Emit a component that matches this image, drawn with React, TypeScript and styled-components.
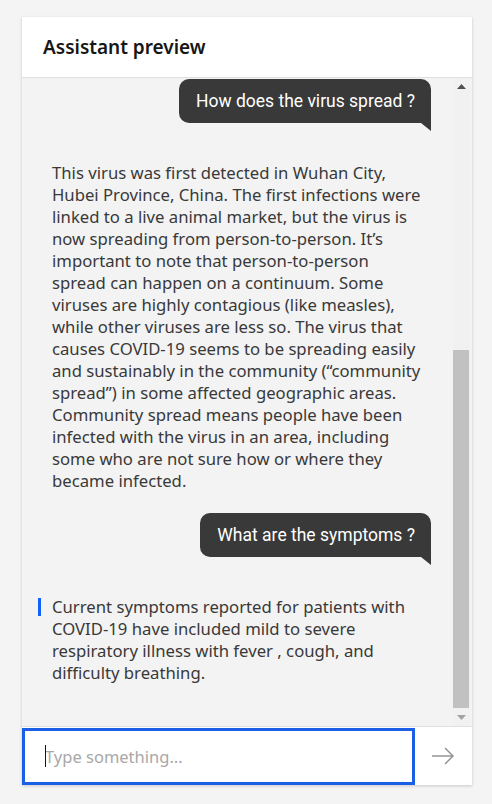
import React from "react";
import styled, { createGlobalStyle } from "styled-components";

const GlobalStyle = createGlobalStyle`
  html, body { margin: 0; padding: 0; background: #f4f4f4; }
  body { font-family: "Noto Sans", "Open Sans", sans-serif; }
  * { box-sizing: border-box; }
`;

const Page = styled.div`
  width: 492px;
  height: 804px;
  padding: 17px 20px 19px 22px;
  background: #f4f4f4;
`;

const Card = styled.section`
  width: 450px;
  height: 768px;
  display: flex;
  flex-direction: column;
  background: #f3f3f3;
  box-shadow: 0 1px 3px rgba(0, 0, 0, 0.18);
`;

const Header = styled.header`
  height: 61px;
  flex: none;
  display: flex;
  align-items: center;
  padding: 0 21px;
  background: #ffffff;
  border-bottom: 1px solid #e0e0e0;
  font-family: "Noto Sans", sans-serif;
  font-weight: 600;
  font-size: 19px;
  color: #161616;
`;

const Body = styled.div`
  flex: 1;
  display: flex;
  min-height: 0;
`;

const MessageList = styled.div`
  flex: 1;
  display: flex;
  flex-direction: column;
  padding: 1px 22px 0 16px;
  overflow: hidden;
`;

const UserRow = styled.div`
  display: flex;
  justify-content: flex-end;
  margin-bottom: 39px;
`;

const Bubble = styled.div`
  position: relative;
  background: #393939;
  color: #ffffff;
  font-family: Roboto, "Liberation Sans", sans-serif;
  font-size: 17.5px;
  line-height: 22px;
  padding: 11px 16px 11px 17px;
  border-radius: 10px 10px 0 10px;
  white-space: nowrap;

  &::after {
    content: "";
    position: absolute;
    right: 0;
    bottom: -8px;
    width: 10px;
    height: 8px;
    background: #393939;
    clip-path: polygon(0 0, 100% 0, 100% 100%);
  }
`;

const BotRow = styled.div`
  display: flex;
  align-items: flex-start;
  gap: 11px;
  margin-bottom: 21px;
`;

const Marker = styled.span<{ $visible: boolean }>`
  flex: none;
  width: 3px;
  height: 18px;
  margin-top: 2px;
  background: ${(p) => (p.$visible ? "#0f62fe" : "transparent")};
`;

const BotText = styled.p`
  margin: 0;
  font-family: "Noto Sans", sans-serif;
  font-size: 16.7px;
  line-height: 22px;
  color: #393939;
  white-space: nowrap;
`;

const Scrollbar = styled.div`
  width: 17px;
  flex: none;
  margin-right: 2px;
  display: flex;
  flex-direction: column;
  background: #f1f1f1;
`;

const ArrowButton = styled.div`
  height: 17px;
  flex: none;
  display: flex;
  align-items: center;
  justify-content: center;
`;

const Track = styled.div`
  flex: 1;
  display: flex;
  flex-direction: column;
  justify-content: flex-end;
  padding-bottom: 1px;
`;

const Thumb = styled.div`
  width: 16px;
  background: #c1c1c1;
`;

const InputRow = styled.div`
  height: 59px;
  flex: none;
  display: flex;
  background: #ffffff;
  border-top: 1px solid #e0e0e0;
`;

const InputBox = styled.div`
  position: relative;
  width: 393px;
  margin-top: 1px;
  border: 3px solid #1a5fe6;
  display: flex;
  align-items: center;
`;

const TextInput = styled.input`
  width: 100%;
  height: 100%;
  border: none;
  outline: none;
  padding: 0 0 0 20px;
  background: transparent;
  font-family: "Noto Sans", sans-serif;
  font-size: 16.5px;
  color: #161616;

  &::placeholder {
    color: #a8a8a8;
  }
`;

const Caret = styled.span`
  position: absolute;
  left: 20px;
  top: 14px;
  width: 1px;
  height: 22px;
  background: #161616;
`;

const SendButton = styled.button`
  flex: 1;
  border: none;
  background: #ffffff;
  display: flex;
  align-items: center;
  justify-content: center;
  padding: 0 2px 0 0;
`;

const firstAnswer = [
  "This virus was first detected in Wuhan City,",
  "Hubei Province, China. The first infections were",
  "linked to a live animal market, but the virus is",
  "now spreading from person-to-person. It\u2019s",
  "important to note that person-to-person",
  "spread can happen on a continuum. Some",
  "viruses are highly contagious (like measles),",
  "while other viruses are less so. The virus that",
  "causes COVID-19 seems to be spreading easily",
  "and sustainably in the community (\u201ccommunity",
  "spread\u201d) in some affected geographic areas.",
  "Community spread means people have been",
  "infected with the virus in an area, including",
  "some who are not sure how or where they",
  "became infected.",
];

const secondAnswer = [
  "Current symptoms reported for patients with",
  "COVID-19 have included mild to severe",
  "respiratory illness with fever , cough, and",
  "difficulty breathing.",
];

type Message =
  | { from: "user"; text: string }
  | { from: "bot"; lines: string[]; marked: boolean };

const messages: Message[] = [
  { from: "user", text: "How does the virus spread ?" },
  { from: "bot", lines: firstAnswer, marked: false },
  { from: "user", text: "What are the symptoms ?" },
  { from: "bot", lines: secondAnswer, marked: true },
];

const Lines = ({ lines }: { lines: string[] }) => (
  <>
    {lines.map((l, i) => (
      <React.Fragment key={i}>
        {l}
        {i < lines.length - 1 && <br />}
      </React.Fragment>
    ))}
  </>
);

export default function App() {
  return (
    <>
      <GlobalStyle />
      <Page>
        <Card>
          <Header>Assistant preview</Header>
          <Body>
            <MessageList>
              {messages.map((m, i) =>
                m.from === "user" ? (
                  <UserRow key={i}>
                    <Bubble>{m.text}</Bubble>
                  </UserRow>
                ) : (
                  <BotRow key={i}>
                    <Marker $visible={m.marked} />
                    <BotText>
                      <Lines lines={m.lines} />
                    </BotText>
                  </BotRow>
                )
              )}
            </MessageList>
            <Scrollbar>
              <ArrowButton>
                <svg width="9" height="5" viewBox="0 0 9 5">
                  <path d="M0 5 L4.5 0 L9 5 Z" fill="#505050" />
                </svg>
              </ArrowButton>
              <Track>
                <Thumb style={{ height: 358 }} />
              </Track>
              <ArrowButton>
                <svg width="9" height="5" viewBox="0 0 9 5">
                  <path d="M0 0 L9 0 L4.5 5 Z" fill="#a3a3a3" />
                </svg>
              </ArrowButton>
            </Scrollbar>
          </Body>
          <InputRow>
            <InputBox>
              <TextInput placeholder="Type something..." />
              <Caret />
            </InputBox>
            <SendButton aria-label="Send">
              <svg width="24" height="18" viewBox="0 0 24 18" fill="none">
                <path d="M1 9 H22" stroke="#8d8d8d" strokeWidth="1.4" />
                <path d="M14 1 L22 9 L14 17" stroke="#8d8d8d" strokeWidth="1.4" />
              </svg>
            </SendButton>
          </InputRow>
        </Card>
      </Page>
    </>
  );
}
